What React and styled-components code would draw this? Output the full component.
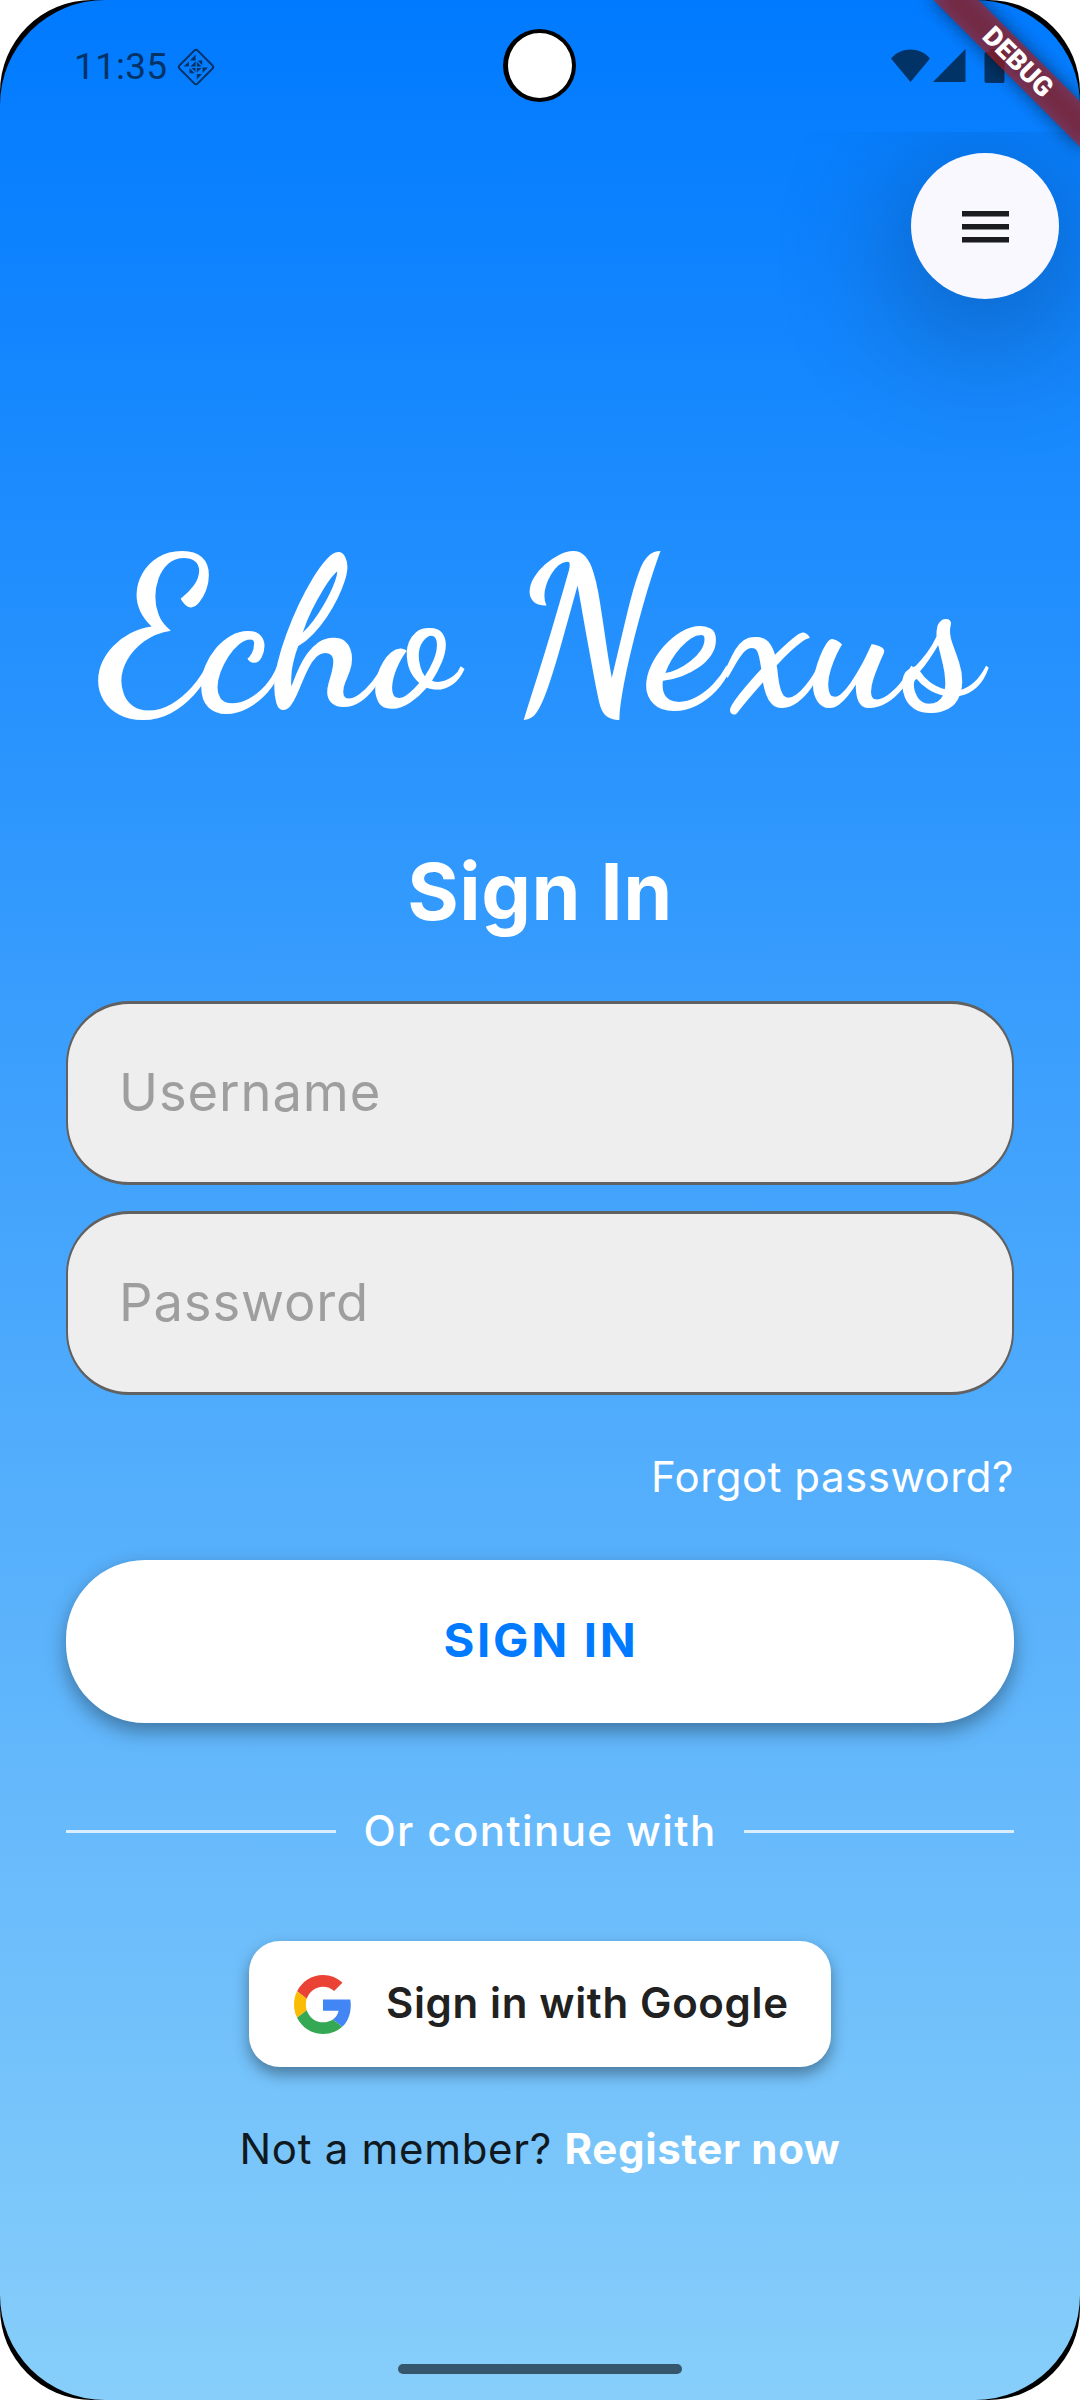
import React from "react";
import styled, { createGlobalStyle } from "styled-components";

const GlobalStyle = createGlobalStyle`
  * { box-sizing: border-box; }
  body { margin: 0; background: #fff; font-family: Inter, "Liberation Sans", sans-serif; }
  button, input { font-family: inherit; border: 0; padding: 0; margin: 0; }
`;

const Device = styled.div`
  width: 1080px;
  height: 2400px;
  background: #000;
  border-radius: 92px;
  overflow: hidden;
`;

const Screen = styled.div`
  position: relative;
  display: flex;
  flex-direction: column;
  height: 100%;
  border-radius: 105px;
  overflow: hidden;
  background: linear-gradient(180deg, #007aff 0%, #87cefa 100%);
`;

const StatusBar = styled.header`
  display: flex;
  align-items: flex-start;
  justify-content: space-between;
  height: 132px;
  padding: 0 75px 0 74px;
`;

const StatusGroup = styled.div`
  display: flex;
  align-items: center;
  gap: ${(p) => p.$gap}px;
  height: 133px;
`;

const Clock = styled.span`
  font-family: Roboto, sans-serif;
  font-size: 37px;
  line-height: 44px;
  letter-spacing: 0.2px;
  color: #023366;
`;

const Camera = styled.div`
  position: absolute;
  left: 503px;
  top: 29px;
  width: 73px;
  height: 73px;
  border: 4px solid #000;
  border-left-width: 5px;
  border-radius: 50%;
  background: #fff;
`;

const Ribbon = styled.div`
  position: absolute;
  left: 913px;
  top: 46px;
  width: 210px;
  height: 32px;
  transform: rotate(45deg);
  color: #fff;
  font: 900 27px/32px Roboto, sans-serif;
  text-align: center;

  &::before,
  &::after {
    content: "";
    position: absolute;
    inset: 0;
  }

  &::before {
    z-index: -2;
    background: rgba(0, 0, 0, 0.5);
    filter: blur(9px);
  }

  &::after {
    z-index: -1;
    background: rgba(183, 28, 28, 0.627);
  }
`;

const Body = styled.main`
  display: flex;
  flex-direction: column;
  flex: 1;
  overflow: hidden;
`;

const AppBar = styled.div`
  display: flex;
  justify-content: flex-end;
  padding: 21px 21px 0;
`;

const MenuButton = styled.button`
  display: flex;
  align-items: center;
  justify-content: center;
  width: 148px;
  height: 146px;
  padding-top: 2px;
  border-radius: 50%;
  background: #f9f8ff;
  box-shadow: 0 26px 125px 20px rgba(0, 0, 0, 0.24);
`;

const Content = styled.form`
  display: flex;
  flex-direction: column;
  align-items: center;
  padding: 181px 66px 0;
`;

const Brand = styled.h1`
  margin: 0;
  height: 300px;
  font-family: "Dancing Script", cursive;
  font-weight: 700;
  font-size: 210px;
  line-height: 310px;
  letter-spacing: 0.75px;
  white-space: nowrap;
  color: #fff;
`;

const Heading = styled.h2`
  margin: 64px 0 61px;
  font-size: 78.75px;
  font-weight: 700;
  line-height: 96px;
  letter-spacing: 0.6px;
  color: #fff;
`;

const Fields = styled.div`
  display: flex;
  flex-direction: column;
  gap: 26px;
  width: 100%;
`;

const Field = styled.input`
  width: 100%;
  height: 184px;
  padding: 0 51px 3px;
  border: solid #616161;
  border-width: 3px 2px;
  border-radius: 63px;
  background: #eee;
  font-size: 52.5px;
  font-weight: 400;
  letter-spacing: 0.9px;

  &::placeholder { color: #9e9e9e; opacity: 1; }
`;

const Forgot = styled.a`
  align-self: flex-end;
  margin-top: 57px;
  font-size: 42px;
  font-weight: 400;
  line-height: 50px;
  letter-spacing: 0.5px;
  color: #fff;
`;

const SubmitButton = styled.button`
  width: 100%;
  height: 163px;
  margin-top: 58px;
  padding: 0 0 5px 2px;
  border-radius: 79px;
  background: #fff;
  box-shadow: 0 8px 20px rgba(0, 0, 0, 0.36);
  font-size: 47.25px;
  font-weight: 700;
  letter-spacing: 2.7px;
  color: #007aff;
`;

const Divider = styled.div`
  display: flex;
  align-items: center;
  gap: 27px;
  width: 100%;
  margin-top: 83px;
  font-size: 42px;
  font-weight: 500;
  line-height: 50px;
  letter-spacing: 1.4px;
  color: #fff;
`;

const Rule = styled.span`
  flex: 1;
  height: 3px;
  margin-top: 1px;
  background: rgba(255, 255, 255, 0.75);
`;

const GoogleButton = styled.button`
  display: flex;
  align-items: center;
  gap: 34px;
  width: 582px;
  height: 126px;
  margin-top: 85px;
  padding-left: 45px;
  border-radius: 31px;
  background: #fff;
  box-shadow: 0 7px 15px rgba(0, 0, 0, 0.38);
  font-size: 42px;
  font-weight: 600;
  letter-spacing: 0.65px;
  white-space: nowrap;
  color: #212121;
`;

const GoogleLabel = styled.span`
  padding-bottom: 3px;
`;

const Register = styled.p`
  margin: 57px 0 0;
  font-size: 42px;
  font-weight: 400;
  line-height: 50px;
  white-space: nowrap;
  letter-spacing: 0.7px;
  color: #101820;

  b { font-weight: 700; color: #fff; }
`;

const HomeIndicator = styled.div`
  position: absolute;
  left: 398px;
  bottom: 26px;
  width: 284px;
  height: 10px;
  border-radius: 5px;
  background: #35566c;
`;

const TuneIcon = () => (
  <svg width="38" height="38" viewBox="0 0 38 38" fill="#023366">
    <rect x="6.2" y="6.2" width="25.6" height="25.6" rx="2.5" transform="rotate(45 19 19)" fill="none" stroke="#023366" strokeWidth="2" />
    <path d="M18.600 6.500v6h-5.600zM12 13.500v5H6.500zM13.500 18.500l5.100-5.300v5.300zM20.500 12.500h4.700v4.700zM19.800 13.800v4.700h4.700zM12.500 20v5.200h5.200zM14.500 20h4v4zM19.800 20h4.700l-4.700 4.500zM25.500 25v-5.500H31zM19.800 31.500v-5.500h5.200z" />
  </svg>
);

const SignalIcons = () => (
  <svg width="115" height="36" viewBox="0 0 115 36" fill="#023366">
    <path d="M1 9.500C11-2.500 30-2.500 40 9.500L20.500 33z" />
    <path d="M75.500 0v33H43z" />
    <path d="M99.500 0h10v3h3a2 2 0 0 1 2 2v27a2 2 0 0 1-2 2h-16a2 2 0 0 1-2-2V5a2 2 0 0 1 2-2h3z" />
  </svg>
);

const MenuIcon = () => (
  <svg width="47" height="32" viewBox="0 0 47 32" fill="#1a1c20">
    <path d="M0 0h47v5.600H0zM0 13h47v5.600H0zM0 26h47v5.600H0z" />
  </svg>
);

const GoogleIcon = () => (
  <svg width="58" height="59" viewBox="0 0 48 48" preserveAspectRatio="none">
    <path fill="#EA4335" d="M24 9.500c3.540 0 6.710 1.220 9.210 3.600l6.850-6.850C35.900 2.380 30.470 0 24 0 14.620 0 6.510 5.380 2.560 13.220l7.980 6.190C12.430 13.720 17.740 9.500 24 9.500z" />
    <path fill="#4285F4" d="M46.980 24.550c0-1.570-.15-3.090-.38-4.550H24v9.020h12.940c-.58 2.960-2.260 5.480-4.780 7.180l7.730 6c4.510-4.180 7.090-10.360 7.090-17.650z" />
    <path fill="#FBBC05" d="M10.530 28.590c-.48-1.450-.76-2.990-.76-4.590s.27-3.140.76-4.590l-7.980-6.190C.92 16.460 0 20.120 0 24c0 3.880.92 7.540 2.560 10.780l7.970-6.190z" />
    <path fill="#34A853" d="M24 48c6.480 0 11.930-2.130 15.890-5.810l-7.730-6c-2.150 1.450-4.920 2.300-8.160 2.300-6.260 0-11.570-4.220-13.470-9.910l-7.980 6.190C6.510 42.620 14.620 48 24 48z" />
  </svg>
);

export default function App() {
  return (
    <>
      <GlobalStyle />
      <Device>
        <Screen>
          <StatusBar>
            <StatusGroup $gap={10}>
              <Clock>11:35</Clock>
              <TuneIcon />
            </StatusGroup>
            <StatusGroup $gap={0}>
              <SignalIcons />
            </StatusGroup>
          </StatusBar>
          <Body>
            <AppBar>
              <MenuButton type="button" aria-label="Menu"><MenuIcon /></MenuButton>
            </AppBar>
            <Content>
              <Brand>Echo Nexus</Brand>
              <Heading>Sign In</Heading>
              <Fields>
                <Field placeholder="Username" />
                <Field placeholder="Password" type="password" />
              </Fields>
              <Forgot>Forgot password?</Forgot>
              <SubmitButton type="button">SIGN IN</SubmitButton>
              <Divider><Rule />Or continue with<Rule /></Divider>
              <GoogleButton type="button"><GoogleIcon /><GoogleLabel>Sign in with Google</GoogleLabel></GoogleButton>
              <Register>Not a member? <b>Register now</b></Register>
            </Content>
          </Body>
          <Camera />
          <Ribbon>DEBUG</Ribbon>
          <HomeIndicator />
        </Screen>
      </Device>
    </>
  );
}
